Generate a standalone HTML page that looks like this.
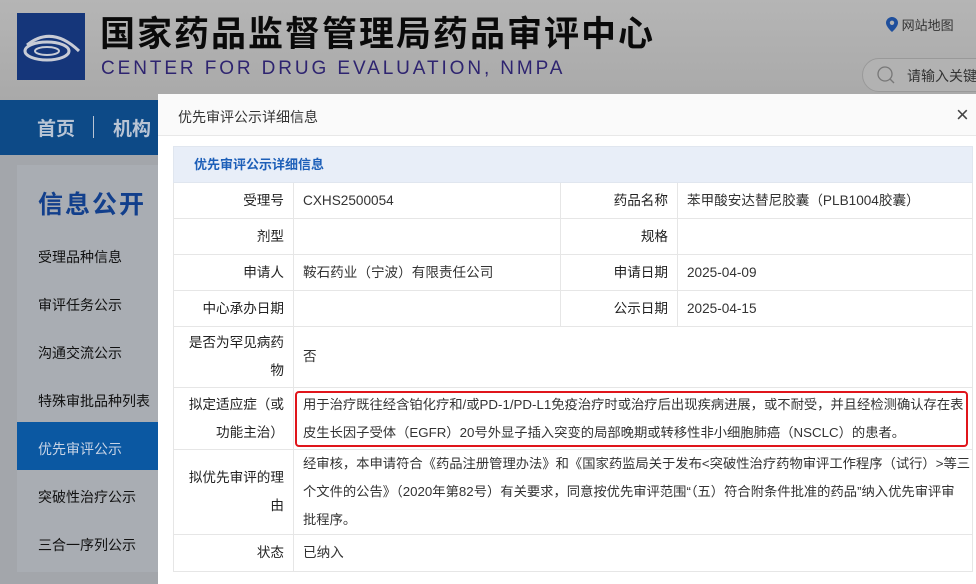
<!DOCTYPE html>
<html><head><meta charset="utf-8">
<style>
*{margin:0;padding:0;box-sizing:border-box}
body{width:976px;height:572px;overflow:hidden;position:relative;font-family:"Liberation Sans","Noto Sans CJK SC",sans-serif;background:#a3a6ab}
.hdr{position:absolute;left:0;top:0;width:976px;height:100px;background:linear-gradient(#b5b5b5,#a9a9a9)}
.logo{position:absolute;left:17px;top:13px;width:68px;height:67px;background:#15367a}
.t1{position:absolute;left:100px;top:6px;font-size:35px;font-weight:bold;letter-spacing:2px;color:#0a0a0a;white-space:nowrap;font-family:"Noto Sans CJK SC",sans-serif}
.t2{position:absolute;left:101px;top:58px;font-size:19px;letter-spacing:2.9px;color:#2e2470;white-space:nowrap}
.map{position:absolute;left:886px;top:15px;font-size:13px;color:#333}
.srch{position:absolute;left:862px;top:58px;width:140px;height:34px;border:1px solid #999;border-radius:17px;background:#b2b2b2;font-size:14px;color:#333;padding:7px 0 0 44px}
.nav{position:absolute;left:0;top:100px;width:976px;height:55px;background:#0d4a87}
.nav span{position:absolute;top:14px;font-size:19px;font-weight:bold;color:#b8c4d4}
.side{position:absolute;left:17px;top:165px;width:145px;height:407px;background:#a9adb3}
.side .h{position:absolute;left:21px;top:20px;font-size:25px;font-weight:bold;color:#123f8c;letter-spacing:2px}
.side .i{position:absolute;left:0;width:145px;height:48px;font-size:14px;color:#111;padding:17px 0 0 21px}
.side .a{background:#0b58a2;color:#c8d4e6}
.modal{position:absolute;left:158px;top:94px;width:830px;height:490px;background:#fff}
.mh{height:42px;border-bottom:1px solid #e8e8e8;background:#fafafa;font-size:14px;color:#333;padding:13px 0 0 20px;position:relative}
.x{position:absolute;left:798px;top:8px;font-size:22px;color:#444;font-weight:normal}
table{position:absolute;left:15px;top:52px;width:799px;border-collapse:collapse;table-layout:fixed;font-size:13.6px;color:#333}
td{border:1px solid #e6e6e6;line-height:28px;vertical-align:middle}
td.l{text-align:right;padding-right:9px;padding-left:14px;color:#222}
td.v{padding-left:9px;padding-right:1px}
td.n{white-space:nowrap;font-size:13.3px;overflow:hidden}
tr.cap td{background:#e8eef8;color:#1d5fb8;font-weight:bold;padding-left:20px;border-color:#e0e6ef;font-size:13px}
.red{position:absolute;left:137px;top:297px;width:673px;height:56px;border:2px solid #e0151b;border-radius:4px}
</style></head><body>
<div class="hdr">
<div class="logo"><svg width="68" height="67" viewBox="0 0 68 67"><ellipse cx="30" cy="38" rx="22" ry="9" fill="none" stroke="#c8ccd6" stroke-width="3"/><ellipse cx="30" cy="38" rx="12" ry="4" fill="none" stroke="#c8ccd6" stroke-width="2"/><path d="M10 32 Q35 12 62 38" fill="none" stroke="#c8ccd6" stroke-width="3"/></svg></div>
<div class="t1">国家药品监督管理局药品审评中心</div>
<div class="t2">CENTER FOR DRUG EVALUATION, NMPA</div>
<div class="map"><svg width="12" height="15" viewBox="0 0 12 15" style="vertical-align:-2px"><path d="M6 0C2.7 0 0 2.6 0 5.8 0 10 6 15 6 15s6-5 6-9.2C12 2.6 9.3 0 6 0z" fill="#1f4f9c"/><circle cx="6" cy="5.8" r="2.2" fill="#b3b3b3"/></svg> 网站地图</div>
<div class="srch"><svg width="20" height="20" viewBox="0 0 20 20" style="position:absolute;left:14px;top:7px"><circle cx="8" cy="8" r="7" fill="none" stroke="#777" stroke-width="1.3"/><path d="M13 13l4 4" stroke="#777" stroke-width="1.3"/></svg>请输入关键</div>
</div>
<div class="nav"><span style="left:37px">首页</span><span style="left:93px;top:16px;width:1px;height:22px;background:#b8c4d4"></span><span style="left:113px">机构</span></div>
<div class="side">
<div class="h">信息公开</div>
<div class="i" style="top:65px">受理品种信息</div>
<div class="i" style="top:113px">审评任务公示</div>
<div class="i" style="top:161px">沟通交流公示</div>
<div class="i" style="top:209px">特殊审批品种列表</div>
<div class="i a" style="top:257px">优先审评公示</div>
<div class="i" style="top:305px">突破性治疗公示</div>
<div class="i" style="top:353px">三合一序列公示</div>
</div>
<div class="modal">
<div class="mh">优先审评公示详细信息<span class="x">×</span></div>
<table>
<colgroup><col style="width:120px"><col style="width:267px"><col style="width:117px"><col style="width:295px"></colgroup>
<tr class="cap" style="height:36px"><td colspan="4">优先审评公示详细信息</td></tr>
<tr style="height:36px"><td class="l">受理号</td><td class="v">CXHS2500054</td><td class="l">药品名称</td><td class="v">苯甲酸安达替尼胶囊（PLB1004胶囊）</td></tr>
<tr style="height:36px"><td class="l">剂型</td><td class="v"></td><td class="l">规格</td><td class="v"></td></tr>
<tr style="height:36px"><td class="l">申请人</td><td class="v">鞍石药业（宁波）有限责任公司</td><td class="l">申请日期</td><td class="v">2025-04-09</td></tr>
<tr style="height:36px"><td class="l">中心承办日期</td><td class="v"></td><td class="l">公示日期</td><td class="v">2025-04-15</td></tr>
<tr style="height:61px"><td class="l">是否为罕见病药物</td><td class="v" colspan="3">否</td></tr>
<tr style="height:62px"><td class="l">拟定适应症（或功能主治）</td><td class="v n" colspan="3">用于治疗既往经含铂化疗和/或PD-1/PD-L1免疫治疗时或治疗后出现疾病进展，或不耐受，并且经检测确认存在表<br>皮生长因子受体（EGFR）20号外显子插入突变的局部晚期或转移性非小细胞肺癌（NSCLC）的患者。</td></tr>
<tr style="height:84px"><td class="l">拟优先审评的理由</td><td class="v n" colspan="3">经审核，本申请符合《药品注册管理办法》和《国家药监局关于发布&lt;突破性治疗药物审评工作程序（试行）&gt;等三<br>个文件的公告》（2020年第82号）有关要求，同意按优先审评范围“（五）符合附条件批准的药品”纳入优先审评审<br>批程序。</td></tr>
<tr style="height:37px"><td class="l">状态</td><td class="v" colspan="3">已纳入</td></tr>
</table>
<div class="red"></div>
</div>
</body></html>
